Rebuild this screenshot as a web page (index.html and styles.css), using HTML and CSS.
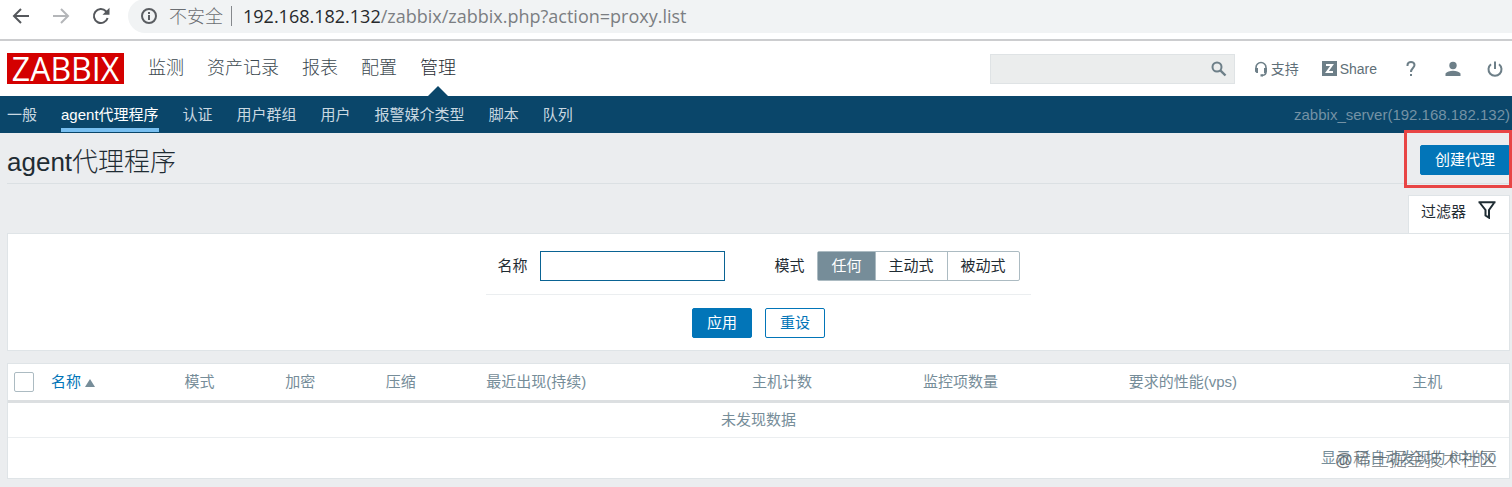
FILE: index.html
```html
<!DOCTYPE html>
<html lang="zh-CN">
<head>
<meta charset="utf-8">
<title>agent代理程序</title>
<link rel="stylesheet" href="styles.css">
</head>
<body>
<div class="browser">
  <button class="nav-btn" type="button" aria-label="后退"><svg width="18" height="18" viewBox="0 0 18 18"><path d="M17 9H2M9 2L2 9l7 7" fill="none" stroke="#55585c" stroke-width="2"/></svg></button>
  <button class="nav-btn" type="button" aria-label="前进"><svg width="18" height="18" viewBox="0 0 18 18"><path d="M1 9h15M9 2l7 7-7 7" fill="none" stroke="#b4b6b9" stroke-width="2"/></svg></button>
  <button class="nav-btn" type="button" aria-label="刷新"><svg width="18" height="18" viewBox="0 0 18 18"><path d="M15.600 11A7 7 0 1 1 14 4.200L16 6" fill="none" stroke="#55585c" stroke-width="2"/><path d="M17.500 .8v7h-7z" fill="#55585c"/></svg></button>
  <div class="address">
    <svg width="18" height="18" viewBox="0 0 18 18"><circle cx="9" cy="9" r="7" fill="none" stroke="#5a5d61" stroke-width="2"/><path d="M9 8v5M9 5v2" stroke="#5a5d61" stroke-width="2"/></svg>
    <span class="insecure">不安全</span>
    <span class="url"><b>192.168.182.132</b>/zabbix/zabbix.php?action=proxy.list</span>
  </div>
</div>

<header class="top">
  <a class="logo" href="#">ZABBIX</a>
  <nav class="menu">
    <a href="#">监测</a>
    <a href="#">资产记录</a>
    <a href="#">报表</a>
    <a href="#">配置</a>
    <a href="#" class="current">管理</a>
  </nav>
  <div class="search">
    <input type="text" aria-label="搜索">
    <button type="button" aria-label="搜索"><svg width="16" height="16" viewBox="0 0 16 16"><circle cx="6" cy="6" r="4.500" fill="none" stroke="#6d7f88" stroke-width="2"/><path d="M9.300 9.300L14.500 14.500" stroke="#6d7f88" stroke-width="2.400"/></svg></button>
  </div>
  <div class="tools">
    <a class="support" href="#"><svg width="14" height="16" viewBox="0 0 14 16"><path d="M2 8V6.500a5 5 0 0 1 10 0V11q0 3-4 3.500" fill="none" stroke="#6d7f88" stroke-width="1.600"/><path d="M1 7h3v5H2.500L1 10.500zM10 7h3v3.500L11.500 12H10zM6.500 13.300h2.500v2.200H6.500z" fill="#6d7f88"/></svg>支持</a>
    <a class="share" href="#"><svg width="15" height="15" viewBox="0 0 15 15"><path d="M0 0h15v15H0z" fill="#6d7f88"/><path d="M4 4h6L5 11h6" fill="none" stroke="#fff" stroke-width="2"/></svg>Share</a>
    <a class="help" href="#" aria-label="帮助"><svg width="10" height="16" viewBox="0 0 10 16"><path d="M1.500 5V4a3.500 3 0 0 1 7 0c0 3-3.500 3-3.500 7" fill="none" stroke="#6d7f88" stroke-width="2"/><path d="M4 13h2v2H4z" fill="#6d7f88"/></svg></a>
    <a class="user" href="#" aria-label="用户"><svg width="16" height="16" viewBox="0 0 16 16"><circle cx="8" cy="4.500" r="3.700" fill="#6d7f88"/><path d="M.5 15v-2.500Q3 9.800 8 9.800t7.500 2.700V15z" fill="#6d7f88"/></svg></a>
    <a class="power" href="#" aria-label="退出"><svg width="16" height="16" viewBox="0 0 16 16"><path d="M4 3.200a6.500 6.500 0 1 0 8 0M8 .5V8" fill="none" stroke="#6d7f88" stroke-width="2"/></svg></a>
  </div>
</header>

<nav class="subnav">
  <a href="#">一般</a>
  <a href="#" class="current">agent代理程序</a>
  <a href="#">认证</a>
  <a href="#">用户群组</a>
  <a href="#">用户</a>
  <a href="#">报警媒介类型</a>
  <a href="#">脚本</a>
  <a href="#">队列</a>
  <span class="server">zabbix_server(192.168.182.132)</span>
</nav>

<main>
  <div class="title-bar">
    <h1>agent代理程序</h1>
    <div class="create"><button class="btn" type="button">创建代理</button></div>
  </div>
  <div class="tab-row">
    <button class="tab" type="button">过滤器<svg width="20" height="18" viewBox="0 0 20 18"><path d="M1.500 1.200h17M3 2l5.500 7v5.500l3.500 2.200V9l5-7" fill="none" stroke="#1f2c33" stroke-width="2"/></svg></button>
  </div>
  <form class="filter">
    <div class="fields">
      <label for="name">名称</label>
      <input id="name" class="name" type="text">
      <span class="mode-label" id="mode">模式</span>
      <div class="segments" role="radiogroup" aria-labelledby="mode">
        <label><input type="radio" name="mode" checked><span>任何</span></label>
        <label><input type="radio" name="mode"><span>主动式</span></label>
        <label><input type="radio" name="mode"><span>被动式</span></label>
      </div>
    </div>
    <div class="actions">
      <button class="btn" type="button">应用</button>
      <button class="btn alt" type="reset">重设</button>
    </div>
  </form>

  <div class="list">
    <table>
      <colgroup><col class="c-check"><col class="c-name"><col class="c-small"><col class="c-small"><col class="c-small"><col class="c-seen"><col class="c-count"><col class="c-items"><col class="c-perf"><col></colgroup>
      <thead>
        <tr>
          <th><input type="checkbox" aria-label="全选"></th>
          <th><a href="#">名称<svg width="10" height="8" viewBox="0 0 10 8"><path d="M5 0l5 8H0z" fill="#768d99"/></svg></a></th>
          <th>模式</th><th>加密</th><th>压缩</th><th>最近出现(持续)</th><th>主机计数</th><th>监控项数量</th><th>要求的性能(vps)</th><th>主机</th>
        </tr>
      </thead>
      <tbody><tr><td colspan="10">未发现数据</td></tr></tbody>
    </table>
    <div class="stats">显示 已自动发现的 0中的0<span class="watermark">@稀土掘金技术社区</span></div>
  </div>
</main>
</body>
</html>
```
FILE: styles.css
```css
* { box-sizing: border-box; }
body {
  margin: 0;
  background: #ebedef;
  color: #1f2c33;
  font: 400 15px/20px "Liberation Sans", "Noto Sans CJK SC", sans-serif;
}
a { color: inherit; text-decoration: none; }
button, input { font: inherit; margin: 0; }
button { cursor: pointer; }
svg { display: block; flex: none; }

.browser {
  display: flex;
  align-items: center;
  height: 41px;
  padding: 0 0 8px 12px;
  gap: 22px;
  background: #fff;
  border-bottom: 2px solid #cccdcf;
}
.nav-btn { padding: 0; border: 0; background: none; }
.address {
  flex: 1;
  display: flex;
  align-items: center;
  height: 34px;
  margin-left: -4px;
  padding-left: 12px;
  background: #f1f3f4;
  border-radius: 17px 0 0 17px;
  font: 18px/24px "Open Sans", "Noto Sans CJK SC", sans-serif;
  color: #6b6e72;
}
.insecure {
  font-weight: 300;
  margin-left: 11px;
  padding-right: 8px;
  border-right: 1px solid #85888c;
  line-height: 20px;
}
.url { margin-left: 11px; color: #7b7e82; }
.url b { font-weight: 400; color: #27292c; }

.top {
  display: flex;
  align-items: center;
  height: 55px;
  padding: 0 9px 0 7px;
  background: #fff;
}
.logo {
  width: 117px;
  height: 31px;
  background: #d40000;
  color: #fff;
  font: 32px/31px "Open Sans", sans-serif;
  text-align: center;
}
.menu { display: flex; align-self: stretch; gap: 23px; margin-left: 24px; font-size: 18px; font-weight: 300; line-height: 55px; color: #3c484f; }
.menu .current { position: relative; color: #1f2c33; }
.menu .current::after {
  content: "";
  position: absolute;
  left: 50%;
  bottom: 0;
  margin-left: -10px;
  border: 10px solid transparent;
  border-top: 0;
  border-bottom-color: #0a466a;
}
.search {
  display: flex;
  width: 245px;
  height: 30px;
  margin-left: auto;
  background: #ebeded;
  border: 1px solid #dfe3e5;
}
.search input { flex: 1; min-width: 0; border: 0; background: none; }
.search button { padding: 0 7px; border: 0; background: none; }
.tools { display: flex; align-items: center; font-size: 14px; color: #5f6f78; }
.tools a { display: flex; align-items: center; gap: 3px; }
.support { margin-left: 19px; }
.share { margin-left: 23px; }
.help { margin-left: 29px; }
.user { margin-left: 29px; }
.power { margin-left: 26px; }

.subnav {
  display: flex;
  gap: 24px;
  height: 37px;
  padding: 0 2px 0 7px;
  background: #0a466a;
  color: #c9d8e1;
  line-height: 37px;
}
.subnav a { border-bottom: 4px solid transparent; height: 36px; }
.subnav .current { color: #fff; border-bottom-color: #78bff0; }
.server { margin-left: auto; color: #7492a5; }

main { padding: 0 2px 8px 7px; }
.title-bar {
  display: flex;
  justify-content: space-between;
  height: 51px;
  border-bottom: 1px solid #dbe0e3;
}
h1 { margin: 0; font-size: 26px; line-height: 58px; font-weight: 300; }
.create { position: relative; padding-top: 12px; }
.create::after {
  content: "";
  position: absolute;
  inset: -3px -2px -5px -16px;
  border: 3px solid #e84545;
  pointer-events: none;
}
.btn {
  height: 30px;
  padding: 0 14px;
  border: 1px solid #0275b8;
  border-radius: 2px;
  background: #0275b8;
  color: #fff;
  line-height: 28px;
}
.btn.alt { background: #fff; color: #0275b8; }
.tab-row { display: flex; justify-content: flex-end; padding-top: 11px; }
.tab {
  display: flex;
  align-items: center;
  gap: 11px;
  height: 38px;
  padding: 0 12px 6px;
  border: 1px solid #dfe4e7;
  border-bottom: 0;
  background: #fff;
  color: #1f2c33;
}
.tab svg { margin-bottom: 4px; }
.filter {
  display: flex;
  flex-direction: column;
  align-items: center;
  height: 118px;
  border: 1px solid #dfe4e7;
  background: #fff;
}
.fields {
  display: flex;
  align-items: center;
  height: 61px;
  padding: 4px 11px 0;
  border-bottom: 1px solid #ebeef0;
}
.name {
  width: 185px;
  height: 30px;
  margin-left: 13px;
  border: 1px solid #0a6393;
}
.mode-label { margin-left: 49px; }
.segments { display: flex; margin-left: 13px; border: 1px solid #acbbc2; border-radius: 2px; line-height: 28px; }
.segments label { position: relative; }
.segments label + label { border-left: 1px solid #acbbc2; }
.segments input { position: absolute; opacity: 0; }
.segments span { display: block; padding: 0 13px; }
.segments input:checked + span { background: #768d99; color: #fff; }
.actions { display: flex; gap: 13px; padding-top: 13px; }

.list { margin-top: 12px; border: 1px solid #dfe4e7; background: #fff; }
table { width: 100%; table-layout: fixed; border-collapse: collapse; color: #768d99; }
th { height: 37px; padding: 0 6px; border-bottom: 3px solid #dcdfe1; font-weight: 400; text-align: left; white-space: nowrap; }
th a { display: flex; align-items: baseline; gap: 4px; color: #0275b8; }
td { height: 36px; padding: 0; border-bottom: 1px solid #ebeef0; text-align: center; }
th input {
  display: block;
  appearance: none;
  width: 20px;
  height: 20px;
  border: 1px solid #acbbc2;
  border-radius: 2px;
  background: #fff;
}
.c-check { width: 37px; }
.c-name { width: 8.9%; }
.c-small { width: 6.7%; }
.c-seen { width: 17.7%; }
.c-count { width: 11.4%; }
.c-items { width: 13.7%; }
.c-perf { width: 18.9%; }
.stats { position: relative; padding: 10px 13px; text-align: right; color: #768d99; }
.watermark { position: absolute; right: 12px; top: 12px; font-size: 18px; font-weight: 300; color: #50575c; opacity: .8; }
```
